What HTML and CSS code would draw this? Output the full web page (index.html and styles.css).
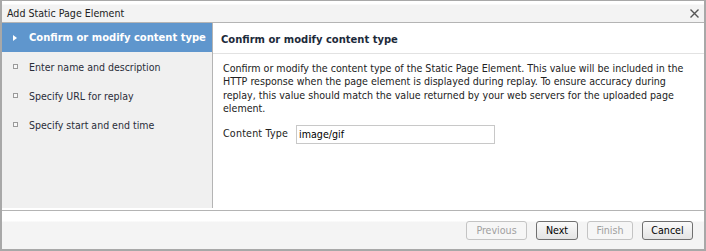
FILE: index.html
```html
<!DOCTYPE html>
<html lang="en">
<head>
    <meta charset="UTF-8">
    <title>Add Static Page Element</title>
    <link rel="stylesheet" href="styles.css">
</head>
<body>
    <div class="dialog">
        <div class="title-bar">
            <span class="title">Add Static Page Element</span>
            <svg class="close" width="9" height="9" viewBox="0 0 9 9">
                <path d="M0.5 0.5 L8.5 8.5 M8.5 0.5 L0.5 8.5" stroke="#555" stroke-width="1.4" fill="none"/>
            </svg>
        </div>

        <div class="body">
            <ul class="steps">
                <li class="step active"><span class="marker arrow"></span>Confirm or modify content type</li>
                <li class="step"><span class="marker box"></span>Enter name and description</li>
                <li class="step"><span class="marker box"></span>Specify URL for replay</li>
                <li class="step"><span class="marker box"></span>Specify start and end time</li>
            </ul>

            <section class="content">
                <h1>Confirm or modify content type</h1>
                <p>Confirm or modify the content type of the Static Page Element. This value will be included in the HTTP response when the page element is displayed during replay. To ensure accuracy during replay, this value should match the value returned by your web servers for the uploaded page element.</p>
                <div class="field">
                    <label for="contentType">Content Type</label>
                    <input type="text" id="contentType" value="image/gif">
                </div>
            </section>
        </div>

        <div class="footer">
            <button class="btn btn-prev" disabled>Previous</button>
            <button class="btn btn-next">Next</button>
            <button class="btn btn-finish" disabled>Finish</button>
            <button class="btn btn-cancel">Cancel</button>
        </div>
    </div>
</body>
</html>
```

FILE: styles.css
```css
/* Reset default browser styles */
* {
    margin: 0;
    padding: 0;
    box-sizing: border-box;
}

body {
    background-color: #fff;
    font-family: "DejaVu Sans", sans-serif;
    font-stretch: condensed;
    font-size: 10.6px;
    color: #222;
}

.dialog {
    width: 706px;
    height: 251px;
    border: 1px solid #a8a8a8;
    border-left-width: 2px;
    border-right-width: 2px;
    border-bottom-width: 2px;
    display: flex;
    flex-direction: column;
    background-color: #fff;
}

.title-bar {
    height: 22px;
    display: flex;
    align-items: center;
    justify-content: space-between;
    padding: 3px 5px 0 5px;
    background: linear-gradient(#fff 0, #fff 3px, #f3f3f3 4px, #f3f3f3 100%);
    border-bottom: 1px solid #b4b4b4;
}

.title {
    font-size: 10.6px;
    color: #222;
}

.close {
    margin-top: 1px;
}

.body {
    flex: 1;
    display: flex;
}

/* Left step list */
.steps {
    list-style: none;
    width: 211px;
    background-color: #f0f0f0;
    border-right: 1px solid #b4b4b4;
    margin-bottom: 2px;
}

.step {
    height: 29px;
    display: flex;
    align-items: center;
    padding-left: 10px;
    color: #2a2d3a;
    font-size: 10.5px;
}

.step.active {
    background-color: #5f96cd;
    color: #fff;
    font-weight: bold;
    font-size: 11.1px;
}

.marker {
    display: inline-block;
    flex-shrink: 0;
}

.arrow {
    width: 0;
    height: 0;
    margin-left: 1px;
    margin-right: 12px;
    border-top: 3.5px solid transparent;
    border-bottom: 3.5px solid transparent;
    border-left: 4px solid #fff;
}

.box {
    width: 5px;
    height: 5px;
    margin-left: 1px;
    margin-right: 11px;
    border: 1px solid #9a9a9a;
    background-color: #f8f8f8;
}

/* Right content */
.content {
    flex: 1;
    padding: 0 10px;
}

.content h1 {
    font-size: 11.1px;
    font-weight: bold;
    color: #1c2a3a;
    height: 31px;
    line-height: 34px;
    border-bottom: 1px solid #e2e2e2;
    margin: 0 -10px;
    padding: 0 8px;
}

.content p {
    margin-top: 8px;
    line-height: 13.4px;
    color: #222;
}

.field {
    margin-top: 9px;
    display: flex;
    align-items: center;
}

.field label {
    margin-right: 8px;
    margin-top: -3px;
    letter-spacing: 0.2px;
}

.field input {
    width: 199px;
    height: 19px;
    border: 1px solid #c8c8c8;
    padding: 0 2px;
    font-family: inherit;
    font-stretch: condensed;
    font-size: 10.6px;
    color: #000;
}

/* Bottom buttons */
.footer {
    height: 39px;
    border-top: 1px solid #b4b4b4;
    background: linear-gradient(#fff 0, #fff 10px, #f4f4f4 11px, #f4f4f4 100%);
    display: flex;
    justify-content: flex-end;
    align-items: center;
    gap: 9px;
    padding: 0 11px 0 0;
}

.btn {
    height: 19px;
    font-family: inherit;
    font-stretch: condensed;
    font-size: 10.6px;
    color: #000;
    background: linear-gradient(#fafafa, #e4e4e4);
    border: 1px solid #707070;
    border-radius: 3px;
}

.btn-prev {
    width: 61px;
}

.btn-next {
    width: 42px;
}

.btn-finish {
    width: 46px;
}

.btn-cancel {
    width: 51px;
}

.btn:disabled {
    color: #a0a0a0;
    border-color: #c4c4c4;
    background: #f6f6f6;
}
```
